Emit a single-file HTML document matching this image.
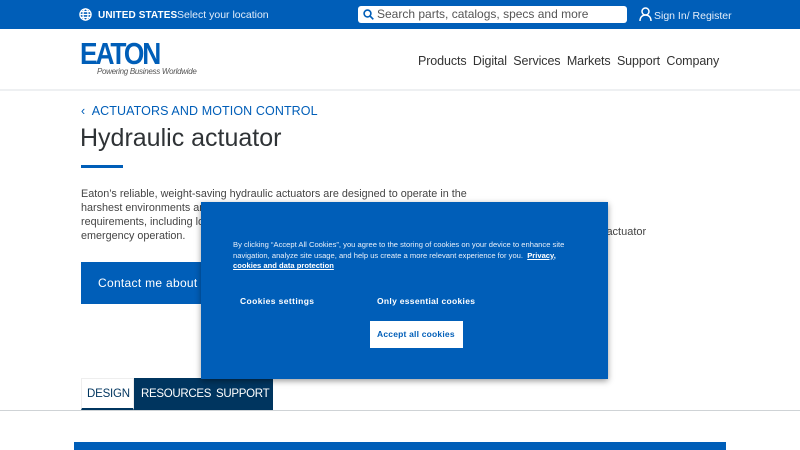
<!DOCTYPE html>
<html><head><meta charset="utf-8"><style>
*{margin:0;padding:0;box-sizing:border-box}
body{width:800px;height:450px;overflow:hidden;background:#fff;font-family:"Liberation Sans",sans-serif;position:relative;color:#333}
.a{position:absolute;white-space:nowrap}
</style></head><body>
<div class="a" style="left:0;top:0;width:800px;height:29px;background:#005eb8"></div>
<svg class="a" style="left:79px;top:8px" width="13" height="13" viewBox="0 0 13 13" fill="none" stroke="#fff" stroke-width="1.3"><circle cx="6.5" cy="6.5" r="5.6"/><ellipse cx="6.5" cy="6.5" rx="2.5" ry="5.6"/><path d="M1 6.5h11M2 3.6h9M2 9.4h9"/></svg>
<div class="a" style="left:98px;top:10px;font-size:10px;font-weight:bold;color:#fff;letter-spacing:.1px">UNITED STATES</div>
<div class="a" style="left:177px;top:9px;font-size:10.5px;color:#e4eefa">Select your location</div>
<div class="a" style="left:358px;top:6px;width:269px;height:17px;background:#fff;border-radius:3px"></div>
<svg class="a" style="left:363px;top:9px" width="11" height="11" viewBox="0 0 11 11" fill="none" stroke="#005eb8" stroke-width="1.6"><circle cx="4.5" cy="4.5" r="3.4"/><path d="M7 7l3.3 3.3"/></svg>
<div class="a" style="left:377px;top:7px;font-size:12px;color:#555">Search parts, catalogs, specs and more</div>
<svg class="a" style="left:639px;top:7px" width="13" height="14" viewBox="0 0 13 14" fill="none" stroke="#fff" stroke-width="1.5"><circle cx="6.5" cy="4.5" r="3.5"/><path d="M1 14c0-4 2.5-6 5.5-6s5.5 2 5.5 6"/></svg>
<div class="a" style="left:654px;top:10px;font-size:10.5px;color:#e4eefa">Sign In/ Register</div>
<div class="a" style="left:0;top:89px;width:800px;height:2px;background:#eef0f2"></div>
<div class="a" style="left:80px;top:40px;font-size:31px;font-weight:bold;color:#005eb8;letter-spacing:-2.5px;line-height:28px;transform:scaleX(.85);transform-origin:left">EATON</div>
<div class="a" style="left:97px;top:67px;font-size:8px;font-style:italic;color:#555;letter-spacing:-.3px">Powering Business Worldwide</div>
<div class="a" style="left:418px;top:54px;font-size:12.5px;color:#333;word-spacing:3px;letter-spacing:-.1px">Products Digital Services Markets Support Company</div>
<div class="a" style="left:81px;top:104px;font-size:12.5px;color:#005eb8;letter-spacing:.1px">‹&nbsp; ACTUATORS AND MOTION CONTROL</div>
<div class="a" style="left:80px;top:124px;font-size:25px;color:#2f3336">Hydraulic actuator</div>
<div class="a" style="left:81px;top:165px;width:42px;height:3px;background:#005eb8"></div>
<div class="a" style="left:81px;top:187px;font-size:10.8px;line-height:14px;color:#444">Eaton’s reliable, weight-saving hydraulic actuators are designed to operate in the<br>harshest environments and meet demanding<br>requirements, including load<br>emergency operation.</div>
<div class="a" style="left:593px;top:226px;font-size:11px;color:#444">lic actuator</div>
<div class="a" style="left:81px;top:262px;width:160px;height:42px;background:#005eb8"></div>
<div class="a" style="left:98px;top:276px;font-size:12px;color:#fff;letter-spacing:.3px">Contact me about this</div>
<div class="a" style="left:81px;top:378px;width:53px;height:32px;background:#fff;border:1px solid #eee;border-bottom:2px solid #00355f"></div>
<div class="a" style="left:87px;top:388px;font-size:11.5px;color:#00355f;letter-spacing:-.2px">DESIGN</div>
<div class="a" style="left:134px;top:378px;width:139px;height:32px;background:#00355f"></div>
<div class="a" style="left:141px;top:388px;font-size:11.5px;color:#fff;letter-spacing:-.3px;word-spacing:2px">RESOURCES SUPPORT</div>
<div class="a" style="left:0;top:410px;width:800px;height:1px;background:#cfd3d6"></div>
<div class="a" style="left:74px;top:442px;width:652px;height:8px;background:#005eb8"></div>
<div class="a" style="left:201px;top:202px;width:407px;height:177px;background:#005eb8;box-shadow:0 2px 6px rgba(0,0,0,.4)"></div>
<div class="a" style="left:233px;top:240px;font-size:7.6px;line-height:10.6px;color:#e8f0fa;white-space:normal;width:352px">By clicking “Accept All Cookies”, you agree to the storing of cookies on your device to enhance site navigation, analyze site usage, and help us create a more relevant experience for you. &nbsp;<u style="font-weight:bold;color:#fff">Privacy, cookies and data protection</u></div>
<div class="a" style="left:240px;top:296px;font-size:8.5px;font-weight:bold;color:#fff;letter-spacing:.4px">Cookies settings</div>
<div class="a" style="left:377px;top:296px;font-size:8.5px;font-weight:bold;color:#fff;letter-spacing:.3px">Only essential cookies</div>
<div class="a" style="left:370px;top:321px;width:93px;height:27px;background:#fff"></div>
<div class="a" style="left:377px;top:329px;font-size:8.5px;font-weight:bold;color:#005eb8;letter-spacing:.2px">Accept all cookies</div>
</body></html>
